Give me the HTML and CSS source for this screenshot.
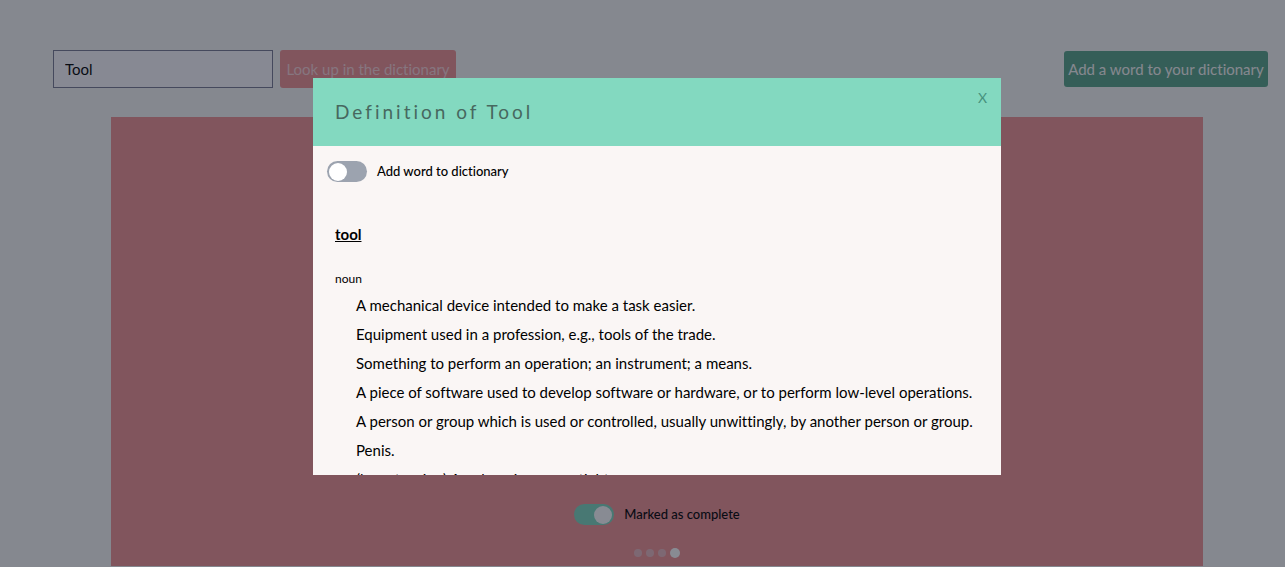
FILE: index.html
```html
<!DOCTYPE html>
<html lang="en">
<head>
<meta charset="utf-8">
<meta name="viewport" content="width=device-width, initial-scale=1">
<title>Dictionary</title>
<link rel="stylesheet" href="styles.css">
</head>
<body>
<div class="page">
  <header class="toolbar">
    <form class="lookup">
      <input class="lookup-input" type="text" value="Tool" aria-label="Word">
      <button class="btn btn-lookup" type="button">Look up in the dictionary</button>
    </form>
    <button class="btn btn-add" type="button">Add a word to your dictionary</button>
  </header>
  <main class="card">
    <label class="switch-row">
      <input class="switch" type="checkbox" checked>
      <span>Marked as complete</span>
    </label>
    <nav class="dots" aria-label="Pages">
      <button class="dot" type="button" aria-label="Page 1"></button>
      <button class="dot" type="button" aria-label="Page 2"></button>
      <button class="dot" type="button" aria-label="Page 3"></button>
      <button class="dot dot-active" type="button" aria-label="Page 4"></button>
    </nav>
  </main>
</div>
<div class="overlay">
  <section class="modal" role="dialog" aria-labelledby="modal-title">
    <header class="modal-header">
      <h2 class="modal-title" id="modal-title">Definition of Tool</h2>
      <button class="modal-close" type="button" aria-label="Close">X</button>
    </header>
    <div class="modal-body">
      <label class="switch-row">
        <input class="switch" type="checkbox">
        <span>Add word to dictionary</span>
      </label>
      <div class="entry">
        <h3 class="entry-word">tool</h3>
        <p class="entry-class">noun</p>
        <ul class="entry-list">
          <li>A mechanical device intended to make a task easier.</li>
          <li>Equipment used in a profession, e.g., tools of the trade.</li>
          <li>Something to perform an operation; an instrument; a means.</li>
          <li>A piece of software used to develop software or hardware, or to perform low-level operations.</li>
          <li>A person or group which is used or controlled, usually unwittingly, by another person or group.</li>
          <li>Penis.</li>
          <li>(by extension) An obnoxious or uptight person.</li>
        </ul>
      </div>
    </div>
  </section>
</div>
</body>
</html>
```
FILE: styles.css
```css
* { box-sizing: border-box; }

body {
  margin: 0;
  background: #f9f8f6;
  color: #000;
  font-family: Lato, "Liberation Sans", sans-serif;
  font-size: 15px;
  font-variant-ligatures: none;
}

button, input { font: inherit; font-variant-ligatures: none; }

.page {
  display: flex;
  flex-direction: column;
  height: 100vh;
  padding: 50px 17px 1px 53px;
}

.toolbar {
  display: flex;
  justify-content: space-between;
  align-items: center;
}

.lookup { display: flex; gap: 7px; }

.lookup-input {
  width: 220px;
  height: 38px;
  padding: 0 11px;
  border: 1px solid #787a92;
  background: #fcfbff;
  color: #000;
}

.btn {
  border: 0;
  border-radius: 3px;
  color: #f9f8f6;
  white-space: nowrap;
}

.btn-lookup { width: 176px; padding: 0; background: #f19293; color: #fad4d7; }
.btn-add { width: 204px; height: 36px; padding: 0; background: #59a489; }

.card {
  display: flex;
  flex: 1;
  flex-direction: column;
  justify-content: flex-end;
  align-items: center;
  gap: 23px;
  margin: 29px 65px 0 58px;
  padding-bottom: 8px;
  background: #f19293;
}

.switch-row {
  display: flex;
  align-items: center;
  gap: 10px;
  font-size: 13px;
  font-weight: 500;
}

.switch-row span { padding-bottom: 2px; }

.switch {
  display: flex;
  align-items: center;
  appearance: none;
  width: 40px;
  height: 21px;
  margin: 0;
  padding: 0 2px;
  border-radius: 11px;
  background: #9ca3af;
}

.switch::before {
  content: "";
  width: 18px;
  height: 18px;
  border-radius: 50%;
  background: #fff;
}

.switch:checked { justify-content: flex-end; background: #7ed9be; }

.dots { display: flex; align-items: center; gap: 4px; }

.dot {
  width: 8px;
  height: 8px;
  padding: 0;
  border: 0;
  border-radius: 50%;
  background: #e9b9bf;
}

.dot-active { width: 10px; height: 10px; background: #fff; }

.overlay {
  position: fixed;
  inset: 0;
  display: flex;
  justify-content: center;
  align-items: flex-start;
  padding: 78px 0 0 29px;
  background: rgba(17, 24, 39, 0.5);
}

.modal {
  display: flex;
  flex-direction: column;
  width: 688px;
  max-height: 70vh;
  background: #faf6f5;
}

.modal-header {
  display: flex;
  flex: none;
  justify-content: space-between;
  align-items: flex-start;
  padding: 12px 14px 23px 22px;
  background: #83d9c0;
}

.modal-title {
  margin: 11px 0 0;
  color: #47685f;
  font-size: 19px;
  font-weight: 400;
  line-height: 22px;
  letter-spacing: 3px;
}

.modal-close {
  padding: 0;
  border: 0;
  background: none;
  color: #47927d;
  font-size: 14px;
  line-height: 16px;
}

.modal-body {
  overflow: hidden;
  padding: 15px 14px 0;
}

.entry { padding: 41px 8px 0; }

.entry-word {
  margin: 0;
  font-size: 15px;
  font-weight: 700;
  line-height: 22px;
  text-decoration: underline;
}

.entry-class {
  margin: 25px 0 3px;
  font-size: 12px;
  line-height: 18px;
}

.entry-list {
  margin: 0;
  padding: 0 0 0 21px;
  list-style: none;
  line-height: 29px;
}
```
